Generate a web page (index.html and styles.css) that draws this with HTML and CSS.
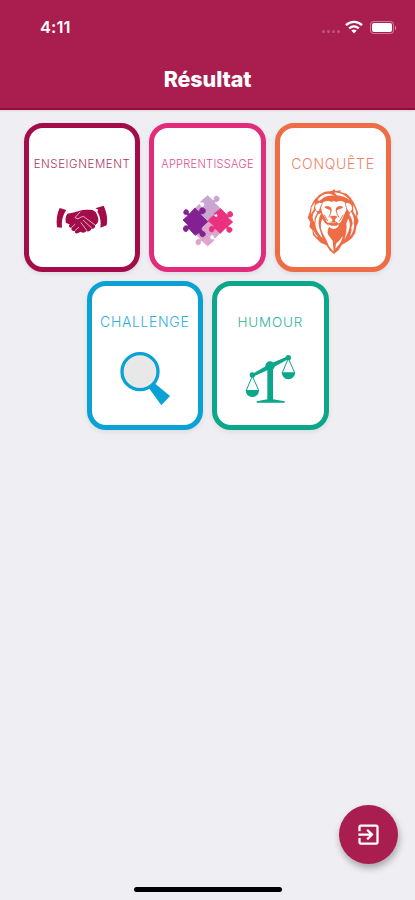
FILE: index.html
```
<!DOCTYPE html>
<html lang="fr">

<head>
    <meta charset="UTF-8">
    <meta name="viewport" content="width=device-width, initial-scale=1.0">
    <title>Résultat</title>
    <link rel="stylesheet" href="styles.css">
</head>

<body>

    <header class="header">
        <div class="status-bar">
            <span class="time">4:11</span>
            <div class="status-icons">
                <span class="signal"><i></i><i></i><i></i><i></i></span>
                <svg class="wifi" viewBox="0 0 18 14" fill="none" stroke="#fff" stroke-width="2.4">
                    <path d="M1 5.2C5.5 .8 12.500 .8 17 5.200" />
                    <path d="M4.200 8.400C7 5.900 11 5.900 13.800 8.400" />
                    <path d="M9 13.500L6.300 10.600Q9 8.600 11.700 10.600Z" fill="#fff" stroke="none" />
                </svg>
                <span class="battery"></span>
            </div>
        </div>
        <h1>Résultat</h1>
    </header>

    <main class="cards">
        <div class="card enseignement">
            <span class="label">ENSEIGNEMENT</span>
            <svg class="icon" viewBox="0 0 198 225">
                <g transform="translate(1 36)" fill="currentColor">
                    <path d="M31 39L51 45L47 51C39 65 36 82 38 98L23 97C20 76 23 55 31 39Z" />
                    <path d="M138 40L163 32C171 49 176 70 172 91L153 98C156 79 152 62 144 50L147 44Z" />
                    <path d="M54 56L76 52L91 47C104 43 117 45 130 45L139 51C147 65 150 78 144 85L137 91C139 98 133 103 126 101C124 108 117 111 111 108C106 115 99 114 94 110L85 115C79 117 75 112 77 107C70 110 64 105 67 99C59 99 57 93 61 88L50 84C47 74 49 64 54 56Z" />
                    <g fill="none" stroke="#fff" stroke-width="2" stroke-linecap="round">
                        <path d="M92 51L77 68Q85 76 96 66L102 64L136 89" />
                        <path d="M102 76L126 98M95 83L112 106M67 97L77 88M78 106L88 97" />
                    </g>
                </g>
            </svg>
        </div>

        <div class="card apprentissage">
            <span class="label">APPRENTISSAGE</span>
            <svg class="icon" viewBox="0 0 198 225">
                <g transform="translate(0 21)" stroke-width="2.500" stroke-linejoin="round">
                    <!-- top piece -->
                    <path fill="#c9a5d2" stroke="#c9a5d2" d="M98 17L113 31Q118 34 118 28C115 17 129 15 132 24C134 33 126 37 121 35Q117 36 120 40L137 57L98 95L59 56L72 44Q76 43 76 47C77 55 89 53 89 44C89 37 83 34 78 37Q75 36 80 32Z" />
                    <!-- bottom piece -->
                    <path fill="#dda5ce" stroke="#dda5ce" d="M98 90L136 128L121 143Q117 145 117 140C116 131 104 134 105 143C106 149 111 151 115 148Q119 149 115 153L98 168L82 153Q78 149 77 155C78 166 64 168 63 158C62 150 69 146 75 149Q78 147 74 144L59 130Z" />
                    <!-- left piece -->
                    <path fill="#832092" stroke="#832092" d="M60 54L67 62Q73 67 74 61C75 51 89 51 91 61C92 70 84 73 79 71Q75 73 80 77L98 95L82 110Q78 114 79 118C81 126 92 124 91 133C89 143 75 142 75 132Q74 126 69 130L60 136L44 118Q40 114 39 119C38 127 25 126 25 117C25 109 31 105 37 108Q42 107 36 102L24 90L38 78Q41 74 36 74C26 76 23 65 30 60C37 57 43 63 40 70Q42 74 46 69Z" />
                    <!-- right piece -->
                    <path fill="#e9317e" stroke="#e9317e" d="M137 56L153 72Q157 76 158 71C159 62 172 63 173 72C174 80 166 83 161 80Q157 81 161 85L173 96L159 109Q156 113 162 112C171 110 175 122 167 126C160 130 153 123 156 117Q156 111 151 115L136 130L122 117Q117 114 117 120C115 129 102 127 103 117C103 110 109 107 115 110Q119 109 115 106L99 92L112 79Q117 75 119 79C122 84 129 82 128 75C127 70 121 70 119 73Q115 72 121 68Z" />
                </g>
            </svg>
        </div>

        <div class="card conquete">
            <span class="label">CONQUÊTE</span>
            <svg class="icon" viewBox="0 0 198 225">
                <g transform="translate(-1 -1)">
                    <path fill="currentColor" d="M96 25L105 19L107 25L124 23L122 28L141 33L151 43L163 60L170 76L176 93L172 101L177 116L170 132L167 150L157 166L143 177L127 186L117 202L103 214L91 204L80 188L63 180L51 168L40 157L38 143L29 132L32 119L24 105L30 89L33 72L43 53L59 36L75 27Z" />
                    <g fill="#fff">
                        <!-- mane -->
                        <path d="M55 49Q72 30 93 34L105 39Q78 37 66 50L57 56Z" />
                        <path d="M104 29Q133 31 151 53Q133 40 111 38Z" />
                        <path d="M36 74L46 58L42 81L34 94Z" />
                        <path d="M41 93L48 83L53 91Q42 105 45 119Q35 108 41 93Z" />
                        <path d="M55 95L65 91Q52 114 59 137L69 167Q48 146 47 125Q47 107 55 95Z" />
                        <path d="M36 127Q41 149 56 164Q45 160 42 147Z" />
                        <path d="M68 108L76 121L90 131Q80 143 86 157L99 174L102 207L88 191Q82 173 70 153Q58 132 68 108Z" />
                        <path d="M153 86Q169 108 159 131Q160 109 149 96Z" />
                        <path d="M146 107Q155 126 146 147L134 171Q143 143 140 122Z" />
                        <path d="M163 119Q166 144 150 163Q158 144 155 134Z" />
                        <path d="M160 66Q172 85 169 101L161 87Z" />
                        <path d="M129 159Q128 176 112 193L107 198L109 183Q123 172 129 159Z" />
                        <!-- ears and face -->
                        <path d="M47 68Q56 57 67 62L60 77Q60 89 50 84Q45 76 47 68Z" />
                        <path d="M138 62Q151 59 156 70Q160 83 149 89L142 78Z" />
                        <path d="M70 59Q85 51 96 58L102 55L110 58Q121 51 135 59L140 81L132 100L124 117Q116 127 112 118L102 122L90 120Q81 123 78 109L68 92L64 76Z" />
                        <path d="M86 125L95 129H110L118 125Q116 137 101 139Q88 138 86 125Z" />
                    </g>
                    <g fill="currentColor">
                        <path d="M74 73Q85 65 95 76L96 87L91 82L78 77Z" />
                        <path d="M109 76Q118 65 131 73L127 77L113 82L108 87Z" />
                        <path d="M90 102Q102 97 114 102L106 110V116L114 119L101 120L90 119L98 116V110Z" />
                    </g>
                    <path d="M94 81Q95 94 87 104M110 81Q110 95 118 104M74 96L84 115M131 96L119 116" fill="none" stroke="currentColor" stroke-width="3" />
                </g>
            </svg>
        </div>

        <div class="card challenge">
            <span class="label">CHALLENGE</span>
            <svg class="icon" viewBox="0 0 198 225">
                <g transform="translate(-96 -198)">
                    <path fill="currentColor" d="M207 340L224 325L270 363L244 391Z" />
                    <circle cx="180" cy="290" r="54" fill="#e8e8e8" stroke="currentColor" stroke-width="10" />
                </g>
            </svg>
        </div>

        <div class="card humour">
            <span class="label">HUMOUR</span>
            <svg class="icon" viewBox="0 0 198 225">
                <g transform="translate(-97 -198)" fill="currentColor">
                    <path d="M143 297L196 266L250 244L253 251L201 280L146 305Z" />
                    <circle cx="143" cy="300" r="8" />
                    <circle cx="196" cy="273" r="14" />
                    <circle cx="251" cy="248" r="8" />
                    <path d="M188 277H205V373L240 379V383H156V379L188 373Z" />
                    <path d="M123 345H163Q162 365 143 366Q124 365 123 345Z" />
                    <path d="M231 292H272Q270 312 251 313Q233 312 231 292Z" />
                    <path d="M143 303L125 346M143 303L162 346M251 250L233 293M251 250L270 293" fill="none" stroke="currentColor" stroke-width="3" />
                </g>
            </svg>
        </div>
    </main>

    <button class="exit-btn" aria-label="Quitter">
        <svg viewBox="0 0 24 24" fill="currentColor">
            <path d="M10.090 15.590L11.500 17l5-5-5-5-1.410 1.410L12.670 11H3v2h9.670l-2.580 2.590zM19 3H5c-1.110 0-2 .9-2 2v4h2V5h14v14H5v-4H3v4c0 1.100.89 2 2 2h14c1.100 0 2-.9 2-2V5c0-1.100-.9-2-2-2z" />
        </svg>
    </button>
    <div class="home-indicator"></div>

</body>

</html>
```
FILE: styles.css
```
* {
    box-sizing: border-box;
}

body {
    margin: 0;
    height: 900px;
    overflow: hidden;
    position: relative;
    background-color: #eeeef3;
    font-family: Inter, "Liberation Sans", sans-serif;
}

.header {
    height: 110px;
    background-color: #a91e4f;
    border-bottom: 2px solid #9d0641;
    box-shadow: 0 1px 2px rgba(0, 0, 0, 0.1);
    color: #fff;
}

.status-bar {
    display: flex;
    justify-content: space-between;
    align-items: center;
    height: 54px;
    padding: 0 19px 0 40px;
}

.time {
    font-size: 16.5px;
    font-weight: 600;
    letter-spacing: 0.1px;
}

.status-icons {
    display: flex;
    align-items: center;
}

.signal {
    display: flex;
    gap: 2px;
    margin: 9px 5px 0 0;
}

.signal i {
    width: 3px;
    height: 3px;
    border-radius: 50%;
    background: rgba(255, 255, 255, 0.25);
}

.wifi {
    width: 18px;
    height: 14px;
    margin-right: 7px;
}

.battery {
    position: relative;
    width: 24px;
    height: 13px;
    margin-right: 2px;
    border: 1px solid rgba(255, 255, 255, 0.4);
    border-radius: 4px;
    background: #fff content-box;
    padding: 1px;
}

.battery::after {
    content: "";
    position: absolute;
    right: -3px;
    top: 4px;
    width: 1.5px;
    height: 4px;
    border-radius: 0 2px 2px 0;
    background: rgba(255, 255, 255, 0.5);
}

h1 {
    margin: 0;
    font-size: 21.5px;
    font-weight: 800;
    line-height: 50px;
    letter-spacing: -0.1px;
    text-align: center;
}

.cards {
    display: flex;
    flex-wrap: wrap;
    justify-content: center;
    gap: 9px;
    padding: 13px 20px;
}

.card {
    display: flex;
    flex-direction: column;
    align-items: center;
    width: 116.5px;
    height: 149px;
    padding-top: 24px;
    border: 5px solid currentColor;
    border-radius: 19px;
    background-color: #fff;
    box-shadow: 0 2px 5px rgba(0, 0, 0, 0.08);
}

.label {
    height: 24px;
    margin-bottom: 7px;
    font-weight: 300;
    line-height: 24px;
    white-space: nowrap;
}

.icon {
    width: 66px;
    height: 75px;
}

.enseignement {
    color: #a30c48;
}

.enseignement .label {
    font-size: 11.5px;
    letter-spacing: 0.55px;
}

.apprentissage {
    color: #e22c7b;
}

.apprentissage .label {
    font-size: 11px;
    letter-spacing: 0.3px;
}

.conquete {
    color: #ee6d47;
}

.conquete .label {
    font-size: 14px;
    letter-spacing: 0.7px;
}

.challenge {
    color: #0aa2d5;
}

.challenge .label {
    font-size: 14px;
    letter-spacing: 0.65px;
}

.humour {
    color: #0aa78b;
}

.humour .label {
    font-size: 13.5px;
    letter-spacing: 0.8px;
}

.label {
    opacity: 0.85;
}

.exit-btn {
    position: absolute;
    right: 17px;
    bottom: 36px;
    display: flex;
    align-items: center;
    justify-content: center;
    width: 59px;
    height: 59px;
    padding: 0;
    border: none;
    border-radius: 50%;
    background-color: #a91e4f;
    color: #fff;
    box-shadow: 1px 4px 7px rgba(0, 0, 0, 0.3);
}

.exit-btn svg {
    width: 27px;
    height: 27px;
}

.home-indicator {
    position: absolute;
    bottom: 8px;
    left: 134px;
    width: 148px;
    height: 5px;
    border-radius: 3px;
    background: #000;
}
```
